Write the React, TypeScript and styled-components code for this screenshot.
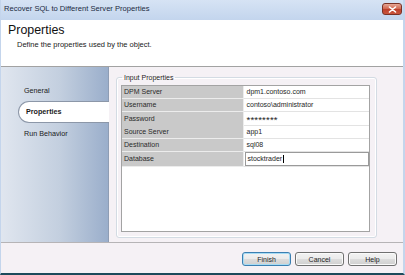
import React from "react";
import styled, { createGlobalStyle } from "styled-components";

const GlobalStyle = createGlobalStyle`
  html, body {
    margin: 0;
    padding: 0;
    background: #fff;
  }
  body {
    font-family: "Liberation Sans", Arial, sans-serif;
    color: #1e1e1e;
  }
`;

const Window = styled.div`
  width: 405px;
  height: 275px;
  box-sizing: border-box;
  display: flex;
  flex-direction: column;
  border-left: 1px solid #c4d5ec;
  border-right: 2px solid #c4d5ec;
  border-bottom: 2px solid #1d4a5b;
  background: #f5f1f5;
  overflow: hidden;
`;

const TitleBar = styled.div`
  height: 20px;
  flex: none;
  display: flex;
  justify-content: space-between;
  align-items: flex-start;
  padding: 0 1px 0 3px;
  background: linear-gradient(#d6e3f4, #c3d5ed);
`;

const TitleText = styled.span`
  margin-top: 4px;
  font-size: 7.6px;
  line-height: 9px;
  color: #1b2a3f;
`;

const CloseButton = styled.div`
  width: 20px;
  height: 12px;
  margin-top: 3px;
  box-sizing: border-box;
  display: flex;
  align-items: center;
  justify-content: center;
  border: 1px solid #7a3226;
  border-radius: 3px;
  background: linear-gradient(#e7a896, #d0634c 50%, #bd3f2b 51%, #c9553d);
`;

const Header = styled.div`
  height: 47px;
  flex: none;
  box-sizing: border-box;
  padding: 2.5px 8px 0 7px;
  background: #fff;
  border-bottom: 1px solid #a2a2a2;
`;

const HeaderTitle = styled.div`
  font-size: 12.4px;
  line-height: 15px;
  color: #111;
`;

const HeaderSub = styled.div`
  margin: 2px 0 0 9px;
  font-size: 7.5px;
  line-height: 9px;
  color: #222;
`;

const Main = styled.div`
  height: 175px;
  flex: none;
  display: flex;
`;

const Nav = styled.div`
  width: 108px;
  box-sizing: border-box;
  padding-top: 12px;
  display: flex;
  flex-direction: column;
  background: linear-gradient(90deg, #e0e6ef, #c3cfdf 55%, #9aaecb);
  border-right: 1px solid #8e9db4;
`;

const NavItem = styled.div<{ $active?: boolean }>`
  height: ${(p) => (p.$active ? "21.5px" : "22px")};
  box-sizing: border-box;
  margin-left: 17px;
  margin-right: ${(p) => (p.$active ? "-1px" : "0")};
  padding-left: ${(p) => (p.$active ? "7px" : "6px")};
  display: flex;
  align-items: center;
  font-size: 7.2px;
  font-weight: ${(p) => (p.$active ? "bold" : "normal")};
  color: #1a1a1a;
  background: ${(p) => (p.$active ? "#fff" : "transparent")};
  border: ${(p) => (p.$active ? "1px solid #8c97a8" : "none")};
  border-right: none;
  border-radius: 11px 0 0 11px;
`;

const Content = styled.div`
  flex: 1;
  display: flex;
  flex-direction: column;
  padding: 5.5px 26px 4px 7px;
  min-width: 0;
`;

const GroupBox = styled.fieldset`
  flex: 1;
  display: flex;
  flex-direction: column;
  min-width: 0;
  margin: 0;
  padding: 3px 6px 5px 4px;
  border: 1px solid #d3dbe3;
  border-radius: 3px;
  box-shadow: inset 0 0 0 1px #fff;
`;

const Legend = styled.legend`
  margin-left: 1px;
  padding: 0 2px;
  font-size: 7px;
  line-height: 9px;
  color: #1e1e1e;
`;

const PropGrid = styled.div`
  flex: 1;
  border: 1px solid #a3a3a3;
  background: #fff;
  display: flex;
  flex-direction: column;
`;

const PropRow = styled.div<{ $tall?: boolean }>`
  height: ${(p) => (p.$tall ? "14.6px" : "13.3px")};
  flex: none;
  display: grid;
  grid-template-columns: 122px 1fr;
  font-size: 7px;
`;

const LabelCell = styled.div`
  box-sizing: border-box;
  padding-left: 2px;
  display: flex;
  align-items: center;
  background: #c9c9c9;
  border-right: 1px solid #ececec;
  border-bottom: 1px solid #ececec;
  color: #2a2a2a;
`;

const ValueCell = styled.div<{ $secret?: boolean }>`
  box-sizing: border-box;
  padding-left: 2.5px;
  display: flex;
  align-items: center;
  font-size: ${(p) => (p.$secret ? "9.5px" : "7px")};
  letter-spacing: ${(p) => (p.$secret ? "0.2px" : "normal")};
  padding-top: ${(p) => (p.$secret ? "1.5px" : "0")};
  border-bottom: 1px solid #e3e3e3;
  color: #1e1e1e;
`;

const EditBox = styled.div`
  flex: 1;
  align-self: stretch;
  box-sizing: border-box;
  margin-left: -2px;
  padding-left: 2px;
  display: flex;
  align-items: center;
  border: 1px solid #9a9a9a;
  color: #1e1e1e;
`;

const Caret = styled.span`
  display: inline-block;
  width: 1px;
  height: 8px;
  margin-left: 0.5px;
  background: #000;
`;

const Footer = styled.div`
  flex: 1;
  box-sizing: border-box;
  display: flex;
  justify-content: flex-end;
  align-items: flex-start;
  gap: 4px;
  padding: 9px 6px 0 0;
  border-top: 1px solid #b6b4b6;
`;

const Button = styled.div<{ $primary?: boolean }>`
  width: 49px;
  height: 14px;
  box-sizing: border-box;
  display: flex;
  align-items: center;
  justify-content: center;
  font-size: 7px;
  color: #1e1e1e;
  border: 1px solid ${(p) => (p.$primary ? "#3c7fb1" : "#707070")};
  border-radius: 3px;
  background: linear-gradient(#f2f2f2, #ebebeb 50%, #dddddd 51%, #cfcfcf);
  box-shadow: ${(p) =>
    p.$primary ? "inset 0 0 0 1px #a6dcf5" : "inset 0 0 0 1px #fafafa"};
`;

const rows: { label: string; value: string; secret?: boolean }[] = [
  { label: "DPM Server", value: "dpm1.contoso.com" },
  { label: "Username", value: "contoso\\administrator" },
  { label: "Password", value: "********", secret: true },
  { label: "Source Server", value: "app1" },
  { label: "Destination", value: "sql08" },
];

const App: React.FC = () => {
  return (
    <>
      <GlobalStyle />
      <Window>
        <TitleBar>
          <TitleText>Recover SQL to Different Server Properties</TitleText>
          <CloseButton>
            <svg width="9" height="7" viewBox="0 0 9 7">
              <path
                d="M1.5 1 L7.5 6 M7.5 1 L1.5 6"
                stroke="#fff"
                strokeWidth="1.6"
                strokeLinecap="round"
              />
            </svg>
          </CloseButton>
        </TitleBar>
        <Header>
          <HeaderTitle>Properties</HeaderTitle>
          <HeaderSub>Define the properties used by the object.</HeaderSub>
        </Header>
        <Main>
          <Nav>
            <NavItem>General</NavItem>
            <NavItem $active>Properties</NavItem>
            <NavItem>Run Behavior</NavItem>
          </Nav>
          <Content>
            <GroupBox>
              <Legend>Input Properties</Legend>
              <PropGrid>
                {rows.map((r) => (
                  <PropRow key={r.label}>
                    <LabelCell>{r.label}</LabelCell>
                    <ValueCell $secret={r.secret}>{r.value}</ValueCell>
                  </PropRow>
                ))}
                <PropRow $tall>
                  <LabelCell>Database</LabelCell>
                  <ValueCell>
                    <EditBox>
                      stocktrader
                      <Caret />
                    </EditBox>
                  </ValueCell>
                </PropRow>
              </PropGrid>
            </GroupBox>
          </Content>
        </Main>
        <Footer>
          <Button $primary>Finish</Button>
          <Button>Cancel</Button>
          <Button>Help</Button>
        </Footer>
      </Window>
    </>
  );
};

export default App;
